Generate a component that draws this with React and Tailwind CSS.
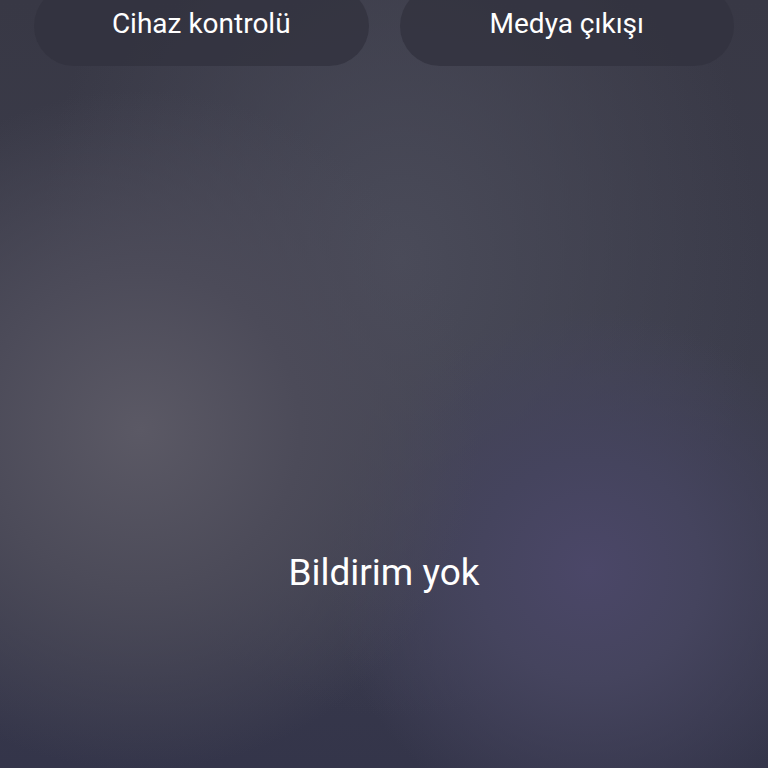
export default function App() {
  return (
    <div
      className="relative w-[768px] h-[768px] overflow-hidden bg-[#3a3b4a] text-white"
      style={{ fontFamily: 'Roboto, "Noto Sans", sans-serif' }}
    >
      <div className="absolute inset-0 bg-[radial-gradient(circle_at_140px_430px,#5b5965_0px,#4c4b59_160px,transparent_340px),radial-gradient(circle_at_590px_570px,#4b4768_0px,#45445e_110px,transparent_260px),radial-gradient(ellipse_at_400px_260px,#4a4b59_0px,transparent_360px),linear-gradient(180deg,#383845_0%,#3c3d4c_50%,#34354a_100%)]" />

      <div className="relative flex flex-col h-full">
        <div className="grid grid-cols-2 gap-[31px] px-[34px] -mt-[14px]">
          <button className="h-[80px] rounded-full bg-[#32323e]/80 pb-[5px] text-[28px] leading-none">
            Cihaz kontrolü
          </button>
          <button className="h-[80px] rounded-full bg-[#32323e]/80 pb-[5px] text-[28px] leading-none">
            Medya çıkışı
          </button>
        </div>

        <div className="flex justify-center mt-[488px]">
          <p className="text-[37px] leading-none">Bildirim yok</p>
        </div>
      </div>
    </div>
  )
}
